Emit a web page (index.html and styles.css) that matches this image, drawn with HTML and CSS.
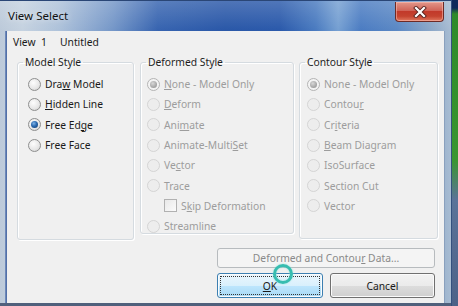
FILE: index.html
```html
<!DOCTYPE html>
<html>
<head lang="en">
    <meta charset="UTF-8">
    <title>View Select</title>
    <link rel="stylesheet" href="styles.css">
</head>
<body>
<div id="win">
    <div id="titlebar">
        <span id="caption">View Select</span>
        <span id="close">
            <svg width="14" height="12" viewBox="0 0 14 12">
                <path d="M3 2 L11 10 M11 2 L3 10" stroke="#5a2420" stroke-width="4" stroke-linecap="square" fill="none"/>
                <path d="M3 2 L11 10 M11 2 L3 10" stroke="#fff" stroke-width="2.2" stroke-linecap="square" fill="none"/>
            </svg>
        </span>
    </div>
    <div id="client">
        <div id="viewrow">
            <span class="lbl">View</span><span class="num">1</span><span>Untitled</span>
        </div>
        <div id="groups">
            <fieldset class="group" id="g-model">
                <legend>Model Style</legend>
                <label class="opt"><i class="radio"></i><span>Dra<u>w</u> Model</span></label>
                <label class="opt"><i class="radio"></i><span><u>H</u>idden Line</span></label>
                <label class="opt"><i class="radio on"></i><span>Free Ed<u>g</u>e</span></label>
                <label class="opt"><i class="radio"></i><span>Free Face</span></label>
            </fieldset>
            <fieldset class="group off" id="g-def">
                <legend>Deformed Style</legend>
                <label class="opt"><i class="radio on"></i><span><u>N</u>one - Model Only</span></label>
                <label class="opt"><i class="radio"></i><span><u>D</u>eform</span></label>
                <label class="opt"><i class="radio"></i><span>Ani<u>m</u>ate</span></label>
                <label class="opt"><i class="radio"></i><span>Animate-Multi<u>S</u>et</span></label>
                <label class="opt"><i class="radio"></i><span>Ve<u>c</u>tor</span></label>
                <label class="opt"><i class="radio"></i><span>Trace</span></label>
                <label class="opt sub"><i class="check"></i><span>S<u>k</u>ip Deformation</span></label>
                <label class="opt"><i class="radio"></i><span>Streamline</span></label>
            </fieldset>
            <fieldset class="group off" id="g-con">
                <legend>Contour Style</legend>
                <label class="opt"><i class="radio on"></i><span>None - Model Only</span></label>
                <label class="opt"><i class="radio"></i><span>Contou<u>r</u></span></label>
                <label class="opt"><i class="radio"></i><span>Cr<u>i</u>teria</span></label>
                <label class="opt"><i class="radio"></i><span><u>B</u>eam Diagram</span></label>
                <label class="opt"><i class="radio"></i><span>IsoSurface</span></label>
                <label class="opt"><i class="radio"></i><span>Section Cut</span></label>
                <label class="opt"><i class="radio"></i><span>Vector</span></label>
            </fieldset>
        </div>
        <div id="actions">
            <button class="btn wide" disabled>Deformed and Contou<u>r</u> Data...</button>
            <div class="btnrow">
                <button class="btn ok"><u>O</u>K<span class="ring"></span></button>
                <button class="btn cancel">Cancel</button>
            </div>
        </div>
    </div>
</div>
</body>
</html>
```

FILE: styles.css
```css
*{
    padding:0;
    margin:0;
}
body{
    width:458px;
    height:306px;
    overflow:hidden;
    background:linear-gradient(#10295a 0,#10295a 8px,#2e8a2a 14px,#3a9630 160px,#5b7399 200px,#4c6288 100%);
    font-family:"Noto Sans","Open Sans",sans-serif;
    font-size:10.3px;
    color:#1a1a1a;
}
#win{
    width:452px;
    height:306px;
    box-sizing:border-box;
    border-right:1px solid #34507e;
    background:
        linear-gradient(rgba(255,255,255,.18),rgba(255,255,255,0) 30px),
        linear-gradient(90deg,#bccada 0,#c5d2e0 5%,#aec2da 13%,#7597c8 25%,#3764b0 35%,#2a58a8 50%,#2b5aab 62%,#4a7bc0 70%,#76a0d2 75%,#4b7cc2 80%,#5b88c4 88%,#8ea9c8 96%,#a8bcd2 100%);
    box-shadow:inset 0 1px 0 #2a4676,inset 0 -3px 0 #50607c;
    display:flex;
    flex-direction:column;
}
#titlebar{
    height:31px;
    display:flex;
    align-items:flex-start;
    padding-left:8px;
}
#caption{
    margin-top:9px;
    line-height:14px;
    font-size:11.5px;
    color:#111;
    text-shadow:0 0 6px rgba(255,255,255,.7);
}
#close{
    margin:2px 7px 0 auto;
    width:49px;
    height:20px;
    box-sizing:border-box;
    border:1px solid #6d2a25;
    border-top:none;
    border-radius:0 0 4px 4px;
    background:linear-gradient(#e3978a 0,#d06458 45%,#c2392a 50%,#c5432f 75%,#e0785f 100%);
    box-shadow:inset 0 0 0 1px rgba(255,200,190,.5);
    display:flex;
    align-items:center;
    justify-content:center;
}
#client{
    margin-left:7px;
    width:437px;
    height:272px;
    background:#f0f0f0;
    box-shadow:-1px 0 0 #5170a8,-2px 0 0 #6d88b8,1px 0 0 #8aa0bd;
}
#viewrow{
    display:flex;
    height:18px;
    padding:4px 0 0 6px;
    box-sizing:border-box;
    line-height:14px;
}
#viewrow .lbl{
    width:28px;
}
#viewrow .num{
    width:19px;
}
#groups{
    display:flex;
    align-items:flex-start;
    margin:6px 0 0 10px;
}
.group{
    box-sizing:border-box;
    border:1px solid #d5dbe0;
    border-radius:3px;
    box-shadow:inset 1px 1px 0 #fff,1px 1px 0 #fff;
    padding-top:5px;
    min-width:0;
}
.group legend{
    margin-left:5px;
    padding:0 2px;
    line-height:14px;
    color:#1e1e1e;
}
#g-model{
    width:117px;
    height:185px;
}
#g-model .opt{
    padding-left:10px;
}
#g-def{
    width:154px;
    height:179px;
    margin-left:6px;
}
#g-def .opt{
    padding-left:6px;
}
#g-def .opt.sub{
    padding-left:23px;
}
#g-con{
    width:139px;
    height:184px;
    margin-left:5px;
}
#g-con .opt{
    padding-left:7px;
}
.opt{
    display:flex;
    align-items:center;
    height:20.3px;
    gap:4px;
    white-space:nowrap;
}
.off .opt{
    color:#9d9d9d;
}
.radio{
    width:13px;
    height:13px;
    box-sizing:border-box;
    border-radius:50%;
    border:1px solid #8e8f8f;
    background:radial-gradient(circle at 40% 35%,#fdfdfd 0,#e6e6e6 60%,#c8c8c8 100%);
    display:flex;
    align-items:center;
    justify-content:center;
    flex:none;
}
.radio.on::after{
    content:"";
    width:7px;
    height:7px;
    border-radius:50%;
    background:radial-gradient(circle at 40% 35%,#7fb3e6 0,#2a69b0 45%,#0e3568 100%);
}
.off .radio{
    border-color:#d4d4d4;
    background:#ededed;
}
.off .radio.on{
    border-color:#b4b4b4;
    background:#f4f4f4;
}
.off .radio.on::after{
    background:radial-gradient(circle at 40% 35%,#d8d8d8 0,#a8a8a8 60%,#8e8e8e 100%);
}
.check{
    width:13px;
    height:13px;
    box-sizing:border-box;
    border:1px solid #b1b1b1;
    background:linear-gradient(135deg,#e8e8e8,#fbfbfb);
    flex:none;
}
#actions{
    margin:8px 0 0 210px;
    width:218px;
    display:flex;
    flex-direction:column;
    gap:5px;
}
.btnrow{
    display:flex;
    gap:7px;
}
.btn{
    height:25px;
    box-sizing:border-box;
    border:1px solid #707070;
    border-radius:3px;
    background:linear-gradient(#f2f2f2 0,#ebebeb 50%,#dddddd 50%,#cfcfcf 100%);
    box-shadow:inset 0 0 0 1px #fbfbfb;
    font:inherit;
    color:#1a1a1a;
}
.btn.wide{
    height:20px;
    width:218px;
    border-color:#b7bbbe;
    background:#f4f4f4;
    color:#8a8a8a;
    box-shadow:none;
}
.btn.ok{
    width:106px;
    position:relative;
    border-color:#3c7fb1;
    background:linear-gradient(#eaf6fd 0,#d9f0fc 50%,#bee6fd 50%,#a7d9f5 100%);
    outline:1px dotted #333;
    outline-offset:-4px;
}
.btn.cancel{
    width:105px;
}
.ring{
    position:absolute;
    left:55px;
    top:-10px;
    width:14px;
    height:14px;
    border:3px solid #37bdb0;
    border-radius:50%;
    box-shadow:0 0 2px #8fe6de,inset 0 0 2px #8fe6de;
}
```
